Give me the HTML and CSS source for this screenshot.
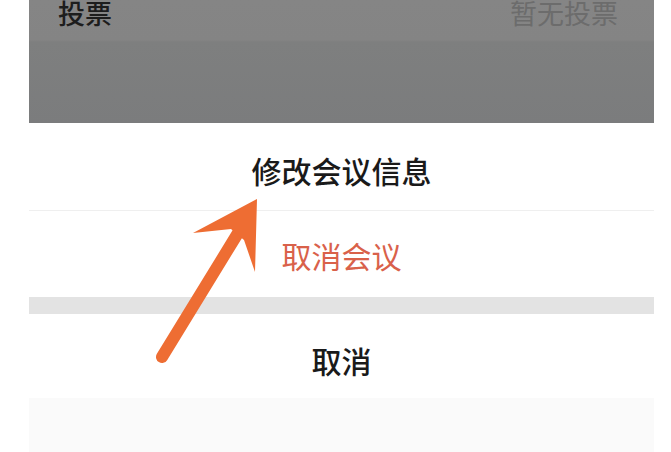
FILE: index.html
```html
<!DOCTYPE html>
<html lang="zh-CN">
<head>
<meta charset="utf-8">
<title>会议操作</title>
<link rel="stylesheet" href="styles.css">
</head>
<body>
<div class="page">
  <div class="mask">
    <div class="mask-row">
      <span class="label">投票</span>
      <span class="value">暂无投票</span>
    </div>
  </div>
  <div class="sheet">
    <div class="item item-edit">修改会议信息</div>
    <div class="item item-cancel-meeting">取消会议</div>
    <div class="gap"></div>
    <div class="item item-cancel">取消</div>
    <div class="sheet-foot"></div>
  </div>
  <svg class="arrow" width="671" height="452" viewBox="0 0 671 452" aria-hidden="true">
    <line x1="162" y1="357" x2="238" y2="233" stroke="#ee6d33" stroke-width="12" stroke-linecap="round"/>
    <polygon points="257,199 193,233 231,229 244,240 255,272" fill="#ee6d33"/>
  </svg>
</div>
</body>
</html>
```
FILE: styles.css
```css
html, body {
  margin: 0;
  padding: 0;
  background: #ffffff;
}
body {
  font-family: "Noto Sans CJK SC", "Noto Sans", sans-serif;
  width: 671px;
  height: 452px;
  overflow: hidden;
}
.page {
  position: relative;
  width: 671px;
  height: 452px;
  padding-left: 29px;
  box-sizing: border-box;
}
.mask {
  width: 625px;
  height: 123px;
  background: linear-gradient(to bottom, #858585 0, #848484 40px, #7e7f7f 42px, #7b7c7d 123px);
}
.mask-row {
  display: flex;
  justify-content: space-between;
  align-items: flex-start;
  height: 40px;
  padding: 0 36px 0 29px;
  font-size: 27px;
  line-height: 27px;
}
.label {
  color: #1d1d1d;
  font-weight: 500;
  margin-top: -1px;
}
.value {
  color: #6c6c6c;
  margin-top: -1px;
}
.sheet {
  width: 625px;
  display: flex;
  flex-direction: column;
}
.item {
  display: flex;
  justify-content: center;
  align-items: center;
  font-size: 30px;
  line-height: 30px;
  background: #ffffff;
}
.item-edit {
  height: 88px;
  padding-top: 6px;
  box-sizing: border-box;
  color: #1a1a1a;
  font-weight: 500;
  border-bottom: 1px solid #efefef;
}
.item-cancel-meeting {
  height: 86px;
  padding-top: 2px;
  box-sizing: border-box;
  color: #d9614a;
}
.gap {
  height: 17px;
  background: #e3e3e3;
}
.item-cancel {
  height: 84px;
  padding-top: 7px;
  box-sizing: border-box;
  color: #1a1a1a;
  font-weight: 500;
}
.sheet-foot {
  height: 54px;
  background: #fafafa;
}
.arrow {
  position: absolute;
  left: 0;
  top: 0;
}
```
